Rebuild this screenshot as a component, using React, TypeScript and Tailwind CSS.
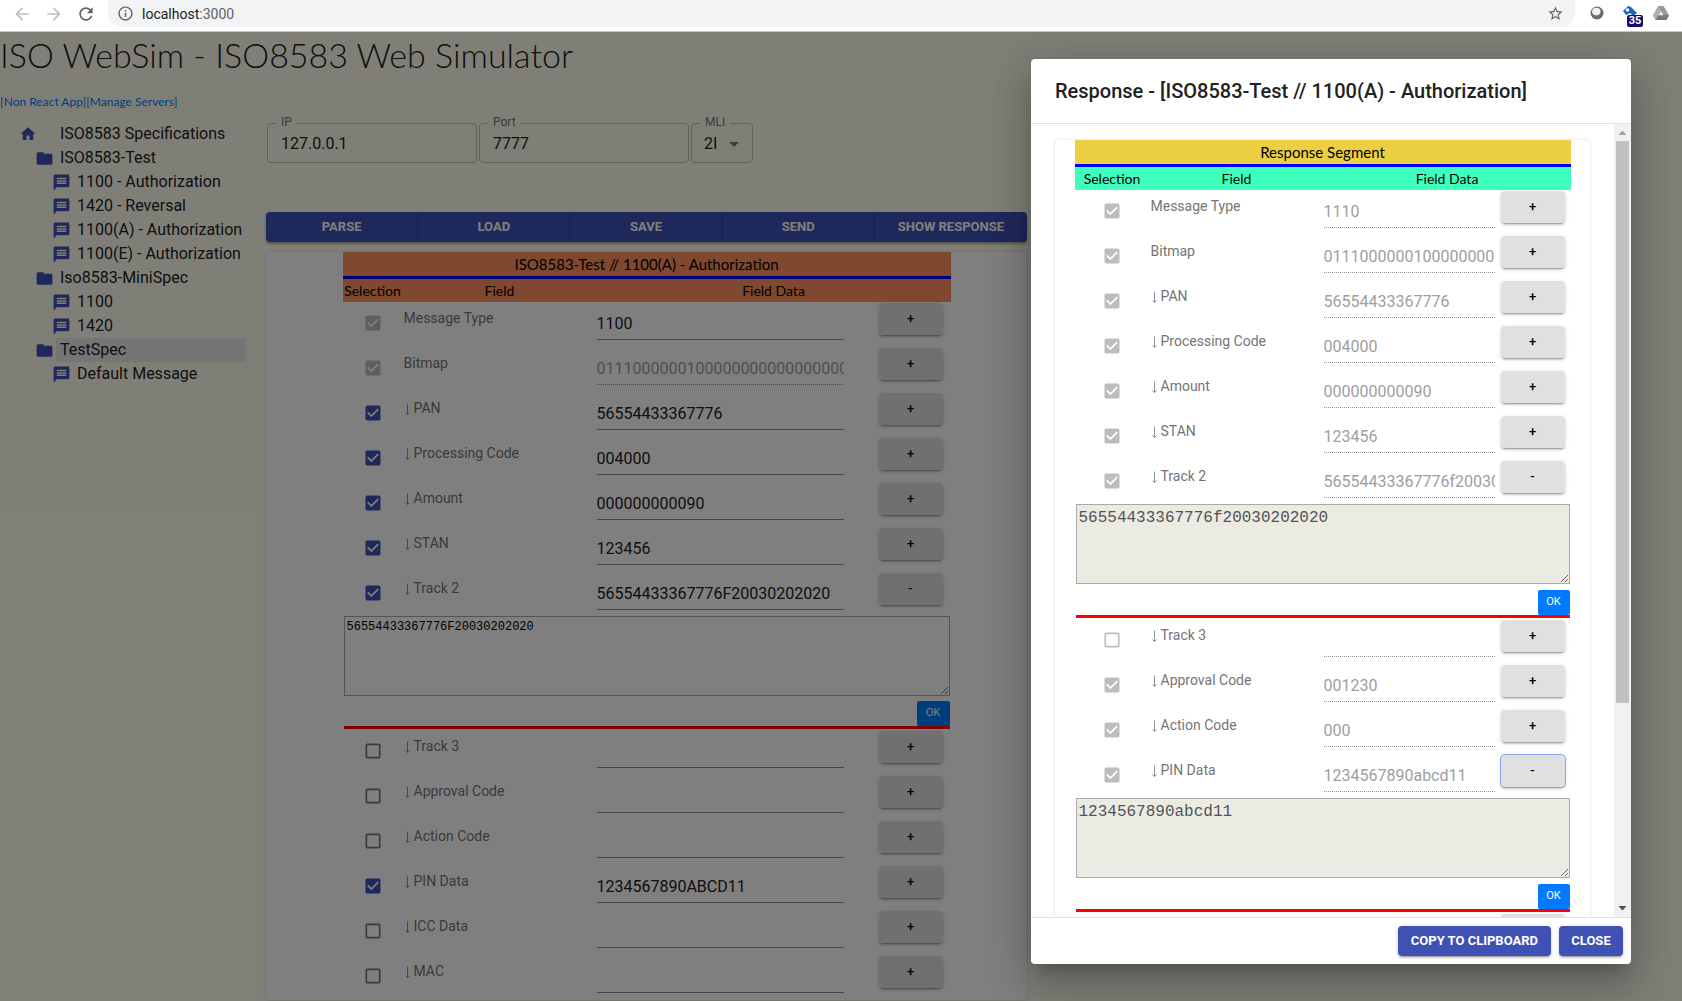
import React from "react";

type Row = {
  label: string;
  value: string;
  arrow: boolean;
  checked: boolean;
  locked?: boolean;
  readOnly?: boolean;
  open?: boolean;
  focused?: boolean;
};

const BITMAP = "0111000000100000000000000000000000000000000000000000000000000000";

const requestRows: Row[] = [
  { label: "Message Type", value: "1100", arrow: false, checked: true, locked: true },
  { label: "Bitmap", value: BITMAP, arrow: false, checked: true, locked: true, readOnly: true },
  { label: "PAN", value: "56554433367776", arrow: true, checked: true },
  { label: "Processing Code", value: "004000", arrow: true, checked: true },
  { label: "Amount", value: "000000000090", arrow: true, checked: true },
  { label: "STAN", value: "123456", arrow: true, checked: true },
  { label: "Track 2", value: "56554433367776F20030202020", arrow: true, checked: true, open: true },
  { label: "Track 3", value: "", arrow: true, checked: false },
  { label: "Approval Code", value: "", arrow: true, checked: false },
  { label: "Action Code", value: "", arrow: true, checked: false },
  { label: "PIN Data", value: "1234567890ABCD11", arrow: true, checked: true },
  { label: "ICC Data", value: "", arrow: true, checked: false },
  { label: "MAC", value: "", arrow: true, checked: false },
];

const locked = { locked: true, readOnly: true };

const responseRows: Row[] = [
  { label: "Message Type", value: "1110", arrow: false, checked: true, ...locked },
  { label: "Bitmap", value: BITMAP, arrow: false, checked: true, ...locked },
  { label: "PAN", value: "56554433367776", arrow: true, checked: true, ...locked },
  { label: "Processing Code", value: "004000", arrow: true, checked: true, ...locked },
  { label: "Amount", value: "000000000090", arrow: true, checked: true, ...locked },
  { label: "STAN", value: "123456", arrow: true, checked: true, ...locked },
  { label: "Track 2", value: "56554433367776f20030202020", arrow: true, checked: true, open: true, ...locked },
  { label: "Track 3", value: "", arrow: true, checked: false, ...locked },
  { label: "Approval Code", value: "001230", arrow: true, checked: true, ...locked },
  { label: "Action Code", value: "000", arrow: true, checked: true, ...locked },
  { label: "PIN Data", value: "1234567890abcd11", arrow: true, checked: true, open: true, focused: true, ...locked },
  { label: "ICC Data", value: "", arrow: true, checked: false, ...locked },
];

const BOX_ON =
  "M19 3H5c-1.11 0-2 .9-2 2v14c0 1.1.89 2 2 2h14c1.11 0 2-.9 2-2V5c0-1.1-.89-2-2-2zm-9 14l-5-5 1.41-1.41L10 14.17l7.59-7.59L19 8l-9 9z";
const BOX_OFF = "M19 5v14H5V5h14m0-2H5c-1.1 0-2 .9-2 2v14c0 1.1.9 2 2 2h14c1.1 0 2-.9 2-2V5c0-1.1-.9-2-2-2z";

function Icon({ d, className }: { d: string; className: string }) {
  return (
    <svg viewBox="0 0 24 24" fill="currentColor" className={className} aria-hidden="true">
      <path d={d} />
    </svg>
  );
}

function Tick({ row }: { row: Row }) {
  const color = row.locked ? "text-[#bdbdbd]" : row.checked ? "text-[#3f51b5]" : "text-[#757575]";
  return (
    <span className={`relative mx-auto mt-[11px] block size-5 ${color}`}>
      <Icon d={row.checked ? BOX_ON : BOX_OFF} className="block size-5" />
      <input
        type="checkbox"
        aria-label={`Select ${row.label}`}
        defaultChecked={row.checked}
        disabled={row.locked}
        className="absolute inset-0 size-5 opacity-0"
      />
    </span>
  );
}

function FieldTable({
  title,
  rows,
  variant,
}: {
  title: string;
  rows: Row[];
  variant: "request" | "response";
}) {
  const req = variant === "request";
  return (
    <table className={`mx-auto table-fixed border-separate border-spacing-0 ${req ? "w-[608px]" : "w-[496px]"}`}>
      <colgroup>
        <col className={req ? "w-[60px]" : "w-[75px]"} />
        <col className={req ? "w-[194px]" : "w-[174px]"} />
        <col />
        <col className={req ? "w-[107px]" : "w-[75px]"} />
      </colgroup>
      <thead className="font-[Lato,sans-serif] text-black">
        <tr className={`h-6 ${req ? "bg-[#ff905e]" : "bg-[#edd042]"}`}>
          <th colSpan={4} className="p-0 text-[15px] leading-6 font-normal">
            {title}
          </th>
        </tr>
        <tr className={`h-[26px] ${req ? "bg-[#ff905e]" : "bg-[#3fffbd]"}`}>
          <th className="border-t-3 border-[#0000ff] p-0 text-sm leading-[23px] font-normal">Selection</th>
          <th className="border-t-3 border-[#0000ff] p-0 text-sm leading-[23px] font-normal">Field</th>
          <th colSpan={2} className="border-t-3 border-[#0000ff] p-0 text-sm leading-[23px] font-normal">
            Field Data
          </th>
        </tr>
      </thead>
      <tbody>
        {rows.map((row) => (
          <React.Fragment key={row.label}>
            <tr className={`align-top ${row.open ? "h-11" : "h-[45px]"}`}>
              <td className="p-0">
                <Tick row={row} />
              </td>
              <td className="p-0 pt-1.5">
                <span className="flex items-center pl-px text-sm leading-5 text-[#757575]">
                  {row.arrow && (
                    <svg viewBox="0 0 10 16" className="mt-1 h-4 w-2.5 shrink-0" fill="none" stroke="#8a949c" aria-hidden="true">
                      <path d="M3.5 1.5v11M1.5 10.5l2 2 2-2" />
                    </svg>
                  )}
                  {row.label}
                </span>
              </td>
              <td className="p-0 pt-1.5">
                <input
                  type="text"
                  aria-label={row.label}
                  defaultValue={row.value}
                  disabled={row.readOnly}
                  className={`block h-8 w-full border-b bg-transparent pb-px text-base outline-none ${
                    row.readOnly
                      ? "border-dotted border-[#949494] text-[#9e9e9e]"
                      : "border-solid border-[#8c8c8c] text-[#212121]"
                  }`}
                />
              </td>
              <td className={`p-0 pt-px ${req ? "pr-2" : "pr-1.5"}`}>
                <button
                  type="button"
                  className={`ml-auto block h-8 w-16 rounded bg-[#e0e0e0] text-[13px] font-medium text-black shadow-[0_3px_1px_-2px_rgba(0,0,0,0.2),0_2px_2px_0_rgba(0,0,0,0.14),0_1px_5px_0_rgba(0,0,0,0.12)] ${
                    row.focused ? "ring-1 ring-[#82aaf0]" : ""
                  }`}
                >
                  {row.open ? "-" : "+"}
                </button>
              </td>
            </tr>
            {row.open && (
              <tr>
                <td colSpan={4} className="px-px pb-px">
                  <textarea
                    aria-label={`${row.label} data`}
                    defaultValue={row.value}
                    disabled={row.readOnly}
                    className={`block h-20 w-full resize border border-[#a9a9a9] font-['Liberation_Mono',monospace] ${
                      req ? "bg-white p-0.5 text-xs leading-4 text-black" : "bg-[#ebebe4] px-0.5 py-px text-base leading-6 text-[#545454]"
                    }`}
                  />
                  <div className={`flex justify-end border-b-3 border-[#ff0000] ${req ? "mt-[5px]" : "mt-1.5"}`}>
                    <button
                      type="button"
                      className={`h-[25px] rounded-xs bg-[#007bff] text-[11px] text-white ${req ? "w-[33px]" : "w-8"}`}
                    >
                      OK
                    </button>
                  </div>
                </td>
              </tr>
            )}
          </React.Fragment>
        ))}
      </tbody>
    </table>
  );
}

const HOME = "M10 20v-6h4v6h5v-8h3L12 3 2 12h3v8z";
const FOLDER = "M10 4H4c-1.1 0-1.99.9-1.99 2L2 18c0 1.1.9 2 2 2h16c1.1 0 2-.9 2-2V8c0-1.1-.9-2-2-2h-8l-2-2z";
const MESSAGE =
  "M20 2H4c-1.1 0-1.99.9-1.99 2L2 22l4-4h14c1.1 0 2-.9 2-2V4c0-1.1-.9-2-2-2zm-2 12H6v-2h12v2zm0-3H6V9h12v2zm0-3H6V6h12v2z";

const tree: { label: string; kind: "root" | "spec" | "message"; selected?: boolean }[] = [
  { label: "ISO8583 Specifications", kind: "root" },
  { label: "ISO8583-Test", kind: "spec" },
  { label: "1100 - Authorization", kind: "message" },
  { label: "1420 - Reversal", kind: "message" },
  { label: "1100(A) - Authorization", kind: "message" },
  { label: "1100(E) - Authorization", kind: "message" },
  { label: "Iso8583-MiniSpec", kind: "spec" },
  { label: "1100", kind: "message" },
  { label: "1420", kind: "message" },
  { label: "TestSpec", kind: "spec", selected: true },
  { label: "Default Message", kind: "message" },
];

function SpecTree() {
  return (
    <ul className="mt-2.5 w-[246px] text-base leading-6 text-[#212121]">
      {tree.map((item) => (
        <li
          key={item.label}
          className={`flex h-6 items-center ${
            item.kind === "root" ? "pl-[19px]" : item.kind === "spec" ? "pl-[35px]" : "pl-[52px]"
          }`}
        >
          <Icon
            d={item.kind === "root" ? HOME : item.kind === "spec" ? FOLDER : MESSAGE}
            className={`shrink-0 text-[#3f51b5] ${item.kind === "root" ? "mr-[17px] size-[18px]" : "mr-0.5 size-[19px]"}`}
          />
          <span className={`grow whitespace-nowrap ${item.kind === "root" ? "pl-1.5" : "pl-1"} ${item.selected ? "bg-[#ebebeb]" : ""}`}>
            {item.label}
          </span>
        </li>
      ))}
    </ul>
  );
}

function Outlined({ id, label, children, className }: { id: string; label: string; children: React.ReactNode; className: string }) {
  return (
    <div className={`relative h-10 rounded border border-[#c4c4bb] ${className}`}>
      <label htmlFor={id} className="absolute -top-2.5 left-2 bg-[#fffff0] px-[5px] text-xs leading-4 text-[#757570]">
        {label}
      </label>
      {children}
    </div>
  );
}

function BrowserBar() {
  return (
    <header className="flex h-8 items-start border-b border-[#c8c8c8] bg-white font-[Roboto,sans-serif] text-[#5f6368]">
      <nav className="flex w-[94px] shrink-0 items-center gap-3 pt-1 pl-3">
        <button type="button" aria-label="Back" className="w-5 shrink-0 text-[#bdbfc2]">
          <Icon d="M20 11H7.83l5.59-5.59L12 4l-8 8 8 8 1.41-1.41L7.83 13H20v-2z" className="size-5" />
        </button>
        <button type="button" aria-label="Forward" className="w-5 shrink-0 text-[#bdbfc2]">
          <Icon d="M12 4l-1.41 1.41L16.17 11H4v2h12.17l-5.58 5.59L12 20l8-8z" className="size-5" />
        </button>
        <button type="button" aria-label="Reload" className="w-5 shrink-0">
          <Icon
            d="M17.65 6.35C16.2 4.9 14.21 4 12 4c-4.42 0-7.99 3.58-7.99 8s3.57 8 7.99 8c3.73 0 6.84-2.55 7.73-6h-2.08c-.82 2.33-3.04 4-5.65 4-3.31 0-6-2.69-6-6s2.69-6 6-6c1.66 0 3.14.69 4.22 1.78L13 11h7V4l-2.35 2.35z"
            className="size-5"
          />
        </button>
      </nav>
      <div className="ml-3.5 flex h-[27px] grow items-center rounded-b-[14px] bg-[#f1f3f4] pr-[11px] pl-[9px]">
        <Icon
          d="M11 17h2v-6h-2v6zm1-15C6.48 2 2 6.48 2 12s4.48 10 10 10 10-4.48 10-10S17.52 2 12 2zm0 18c-4.41 0-8-3.59-8-8s3.59-8 8-8 8 3.59 8 8-3.59 8-8 8zM11 9h2V7h-2v2z"
          className="size-[17px]"
        />
        <span className="ml-2 grow text-sm text-[#202124]">
          localhost<span className="text-[#5f6368]">:3000</span>
        </span>
        <button type="button" aria-label="Bookmark this page">
          <Icon
            d="M22 9.24l-7.19-.62L12 2 9.19 8.63 2 9.24l5.46 4.73L5.82 21 12 17.27 18.18 21l-1.63-7.03L22 9.24zM12 15.4l-3.76 2.27 1-4.28-3.32-2.88 4.38-.38L12 6.1l1.71 4.04 4.38.38-3.32 2.88 1 4.28L12 15.4z"
            className="size-[17px]"
          />
        </button>
      </div>
      <div className="flex w-[107px] items-start pt-[5px] pl-[15px]">
        <svg viewBox="0 0 14 14" className="mt-px size-3.5" aria-hidden="true">
          <circle cx="7" cy="7" r="6.5" fill="#6b6b6b" />
          <ellipse cx="6.3" cy="5.6" rx="4.2" ry="3.8" fill="#f4f4f4" />
        </svg>
        <span className="relative ml-[18px] block h-5 w-6">
          <svg viewBox="0 0 16 14" className="h-3.5 w-4" aria-hidden="true">
            <path d="M1 6l5-5 3 1 6 6-4 3-3-3-4 2z" fill="#1566c0" />
            <circle cx="5.5" cy="5" r="1.8" fill="#fff" />
          </svg>
          <span className="absolute top-[10px] left-[5px] h-3 w-4 rounded-xs bg-[#1a0a6e] text-center text-[11px] leading-3 font-bold text-white">
            35
          </span>
        </span>
        <svg viewBox="0 0 16 14" className="mt-px ml-[7px] h-3.5 w-4" aria-hidden="true">
          <path d="M5.3 0h5.2L16 9.3 13.4 14H2.6L0 9.3z" fill="#999" />
          <path d="M5.3 0L0 9.3 2.6 14 8 4.7z" fill="#b0b0b0" />
          <path d="M2.6 14h10.8L16 9.3H5.3z" fill="#777" />
          <path d="M8 5l2.4 4.3H5.6z" fill="#f2f2f2" />
        </svg>
      </div>
    </header>
  );
}

function ResponseDialog() {
  const action =
    "h-[30px] rounded bg-[#3f51b5] text-[13px] font-bold text-white shadow-[0_3px_1px_-2px_rgba(0,0,0,0.2),0_2px_2px_0_rgba(0,0,0,0.14),0_1px_5px_0_rgba(0,0,0,0.12)]";
  return (
    <div
      role="dialog"
      aria-labelledby="response-title"
      className="absolute top-[27px] right-[51px] bottom-[37px] flex w-[600px] flex-col overflow-visible rounded bg-white shadow-[0_11px_15px_-7px_rgba(0,0,0,0.2),0_24px_38px_3px_rgba(0,0,0,0.14),0_9px_46px_8px_rgba(0,0,0,0.12)]"
    >
      <h2 id="response-title" className="border-b border-[#e0e0e0] px-6 py-4 text-xl leading-8 font-medium text-[#212121]">
        Response - [ISO8583-Test // 1100(A) - Authorization]
      </h2>
      <div className="flex min-h-0 grow">
        <div className="min-w-0 grow overflow-hidden px-6 pt-4">
          <section className="rounded bg-white pb-4 shadow-[0_0_3px_rgba(0,0,0,0.16)]">
            <FieldTable title="Response Segment" rows={responseRows} variant="response" />
          </section>
        </div>
        <div className="flex w-[17px] flex-col items-center bg-[#f1f1f1]" aria-hidden="true">
          <svg viewBox="0 0 17 17" className="size-[17px] shrink-0">
            <path d="M4.5 11h8L8.5 6.5z" fill="#a3a3a3" />
          </svg>
          <div className="min-h-0 w-full grow px-0.5">
            <div className="h-[74%] bg-[#c1c1c1]" />
          </div>
          <svg viewBox="0 0 17 17" className="size-[17px] shrink-0">
            <path d="M4.5 6h8l-4 4.5z" fill="#505050" />
          </svg>
        </div>
      </div>
      <div className="flex justify-end gap-2 border-t border-[#e0e0e0] p-2">
        <button type="button" className={`${action} px-[13px]`}>
          COPY TO CLIPBOARD
        </button>
        <button type="button" className={`${action} w-16`}>
          CLOSE
        </button>
      </div>
    </div>
  );
}

export default function App() {
  return (
    <div className="flex h-screen flex-col overflow-hidden font-[Roboto,sans-serif]">
      <BrowserBar />
      <div className="relative min-h-0 grow overflow-hidden bg-[#fffff0]">
        <h1 className="h-[50px] font-[Lato,sans-serif] text-[34px] leading-[46px] font-light text-[#212121]">
          ISO WebSim - ISO8583 Web Simulator
        </h1>
        <div className="mt-2.5 h-5 font-[Lato,sans-serif] text-xs leading-5 text-[#007bff]">
          <a href="#non-react">[Non React App]</a>
          <a href="#servers">[Manage Servers]</a>
        </div>
        <div className="grid grid-cols-[266px_minmax(0,761px)]">
          <SpecTree />
          <main className="min-w-0 pt-[11px]">
            <div className="flex gap-0.5 pl-px">
              <Outlined id="ip" label="IP" className="w-[210px]">
                <input id="ip" defaultValue="127.0.0.1" className="h-full w-full bg-transparent px-[13px] pt-px text-base text-[#212121] outline-none" />
              </Outlined>
              <Outlined id="port" label="Port" className="w-[210px]">
                <input id="port" defaultValue="7777" className="h-full w-full bg-transparent px-[13px] pt-px text-base text-[#212121] outline-none" />
              </Outlined>
              <Outlined id="mli" label="MLI" className="w-[62px]">
                <select id="mli" className="h-full w-full appearance-none bg-transparent pt-px pl-3 text-base text-[#212121] outline-none">
                  <option>2I</option>
                </select>
                <svg viewBox="0 0 10 5" className="pointer-events-none absolute top-[18px] right-[13px] h-[5px] w-2.5" aria-hidden="true">
                  <path d="M0 0h10L5 5z" fill="#757575" />
                </svg>
              </Outlined>
            </div>
            <div className="mt-[49px] grid h-[30px] grid-cols-5 overflow-hidden rounded bg-[#3f51b5] text-[13px] font-bold text-white shadow-[0_2px_3px_rgba(0,0,0,0.35)]">
              {["PARSE", "LOAD", "SAVE", "SEND", "SHOW RESPONSE"].map((name) => (
                <button key={name} type="button" className="border-r border-[#303f9f] last:border-r-0">
                  {name}
                </button>
              ))}
            </div>
            <section className="mt-2.5 rounded bg-white shadow-[0_0_3px_rgba(0,0,0,0.2)]">
              <FieldTable title="ISO8583-Test // 1100(A) - Authorization" rows={requestRows} variant="request" />
            </section>
          </main>
        </div>
        <div className="absolute inset-0 bg-black/50">
          <ResponseDialog />
        </div>
      </div>
    </div>
  );
}
